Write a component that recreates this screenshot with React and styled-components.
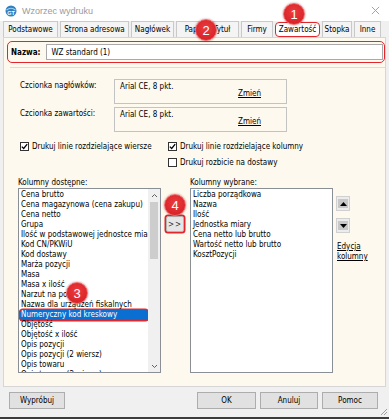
import styled, { createGlobalStyle } from "styled-components";

const GlobalStyle = createGlobalStyle`
  html, body {
    margin: 0;
    padding: 0;
    background: #ffffff;
  }
  body {
    font-family: "DejaVu Sans Condensed", "Liberation Sans", sans-serif;
    font-size: 8px;
    color: #000;
  }
  * {
    box-sizing: border-box;
  }
`;

const tabs = [
  { label: "Podstawowe", width: 55 },
  { label: "Strona adresowa", width: 69 },
  { label: "Nagłówek", width: 43 },
  { label: "Papier i Tytuł", width: 63 },
  { label: "Firmy", width: 32 },
  { label: "Zawartość", width: 45, active: true },
  { label: "Stopka", width: 30 },
  { label: "Inne", width: 27 },
];

const available = [
  "Cena brutto",
  "Cena magazynowa (cena zakupu)",
  "Cena netto",
  "Grupa",
  "Ilość w podstawowej jednostce miary",
  "Kod CN/PKWiU",
  "Kod dostawy",
  "Marża pozycji",
  "Masa",
  "Masa x ilość",
  "Narzut na pozycji",
  "Nazwa dla urządzeń fiskalnych",
  "Numeryczny kod kreskowy",
  "Objętość",
  "Objętość x ilość",
  "Opis pozycji",
  "Opis pozycji (2 wiersz)",
  "Opis towaru",
  "Opis towaru (2 wiersz)",
];

const chosen = [
  "Liczba porządkowa",
  "Nazwa",
  "Ilość",
  "Jednostka miary",
  "Cena netto lub brutto",
  "Wartość netto lub brutto",
  "KosztPozycji",
];

export default function App() {
  return (
    <>
      <GlobalStyle />
      <Window>
        <TitleBar>
          <AppIcon />
          <Title>Wzorzec wydruku</Title>
          <CloseIcon />
        </TitleBar>

        <TabRow>
          {tabs.map((t) => (
            <Tab key={t.label} $width={t.width} $active={t.active}>
              {t.label}
            </Tab>
          ))}
        </TabRow>

        <Panel>
          <NameRow>
            <NameLabel>Nazwa:</NameLabel>
            <NameInput>WZ standard (1)</NameInput>
          </NameRow>
          <Divider />

          <FontRow>
            <FontLabel>Czcionka nagłówków:</FontLabel>
            <FontBox>
              <span>Arial CE, 8 pkt.</span>
              <Link $low>Zmień</Link>
            </FontBox>
          </FontRow>
          <FontRow $gap>
            <FontLabel>Czcionka zawartości:</FontLabel>
            <FontBox>
              <span>Arial CE, 8 pkt.</span>
              <Link $low>Zmień</Link>
            </FontBox>
          </FontRow>

          <CheckGrid>
            <Check checked label="Drukuj linie rozdzielające wiersze" />
            <Check checked label="Drukuj linie rozdzielające kolumny" />
            <span />
            <Check label="Drukuj rozbicie na dostawy" />
          </CheckGrid>

          <Columns>
            <ListColumn>
              <ListLabel>Kolumny dostępne:</ListLabel>
              <ListBox>
                <Items>
                  {available.map((item) => (
                    <Item key={item} $selected={item === "Numeryczny kod kreskowy"}>
                      {item}
                    </Item>
                  ))}
                </Items>
                <ScrollBar>
                  <ScrollArrow>
                    <Chevron up />
                  </ScrollArrow>
                  <Track>
                    <Thumb />
                  </Track>
                  <ScrollArrow>
                    <Chevron />
                  </ScrollArrow>
                </ScrollBar>
              </ListBox>
            </ListColumn>

            <MoveColumn>
              <MoveButton>&gt;&gt;</MoveButton>
            </MoveColumn>

            <ListColumn>
              <ListLabel>Kolumny wybrane:</ListLabel>
              <ListBox>
                <Items>
                  {chosen.map((item) => (
                    <Item key={item}>{item}</Item>
                  ))}
                </Items>
              </ListBox>
            </ListColumn>

            <SideColumn>
              <ArrowButton>
                <Triangle up />
              </ArrowButton>
              <ArrowButton>
                <Triangle />
              </ArrowButton>
              <SideLink>
                <Link>Edycja</Link>
                <Link>kolumny</Link>
              </SideLink>
            </SideColumn>
          </Columns>
        </Panel>

        <Footer>
          <Button $width={56}>Wypróbuj</Button>
          <ButtonGroup>
            <Button $width={59}>OK</Button>
            <Button $width={58}>Anuluj</Button>
            <Button $width={56}>Pomoc</Button>
          </ButtonGroup>
        </Footer>

        <Grip viewBox="0 0 10 10">
          <path d="M9 3 L3 9 M9 6 L6 9" stroke="#a0a0a0" strokeWidth="1" />
        </Grip>

        <Badge $x={283} $y={3}>1</Badge>
        <Badge $x={195} $y={19}>2</Badge>
        <Badge $x={66} $y={282}>3</Badge>
        <Badge $x={164} $y={194}>4</Badge>
      </Window>
    </>
  );
}

function AppIcon() {
  return (
    <svg width="12" height="12" viewBox="0 0 12 12">
      <circle cx="6" cy="6" r="5.5" fill="#2f7fc1" />
      <path d="M1.5 5 Q6 1.5 10.5 5" stroke="#9fd0f0" strokeWidth="1.2" fill="none" />
      <text x="6" y="10" textAnchor="middle" fontSize="5.5" fill="#fff" fontFamily="Liberation Sans" fontWeight="bold">
        GT
      </text>
    </svg>
  );
}

function CloseIcon() {
  return (
    <CloseSvg viewBox="0 0 10 10">
      <path d="M1 1 L9 9 M9 1 L1 9" stroke="#9a9a9a" strokeWidth="1" />
    </CloseSvg>
  );
}

function Check({ checked, label }) {
  return (
    <CheckItem>
      <CheckBox>
        {checked && (
          <svg width="7" height="7" viewBox="0 0 7 7">
            <path d="M0.8 3.6 L2.7 5.5 L6.2 1.2" stroke="#000" strokeWidth="1.3" fill="none" />
          </svg>
        )}
      </CheckBox>
      {label}
    </CheckItem>
  );
}

function Chevron({ up }) {
  return (
    <svg width="7" height="5" viewBox="0 0 7 5">
      <path d={up ? "M1 4 L3.5 1.5 L6 4" : "M1 1 L3.5 3.5 L6 1"} stroke="#606060" strokeWidth="1" fill="none" />
    </svg>
  );
}

function Triangle({ up }) {
  return (
    <TriangleBox>
      <svg width="7" height="4" viewBox="0 0 7 4">
        <path d={up ? "M0 4 L3.5 0 L7 4 Z" : "M0 0 L3.5 4 L7 0 Z"} fill="#000" />
      </svg>
    </TriangleBox>
  );
}

const Window = styled.div`
  position: relative;
  width: 389px;
  height: 419px;
  background: #f0f0f0;
  border-bottom: 2px solid #3c3c3c;
  overflow: hidden;
`;

const TitleBar = styled.div`
  height: 21px;
  background: #ffffff;
  display: flex;
  align-items: center;
  padding: 0 9px 0 5px;
  gap: 5px;
`;

const Title = styled.div`
  flex: 1;
  font-family: "Liberation Sans", sans-serif;
  font-size: 9px;
  color: #9a9a9a;
`;

const CloseSvg = styled.svg`
  width: 9px;
  height: 9px;
`;

const TabRow = styled.div`
  display: flex;
  gap: 2px;
  height: 16px;
  padding-left: 3px;
`;

const Tab = styled.div`
  width: ${(p) => p.$width}px;
  height: ${(p) => (p.$active ? 15 : 16)}px;
  margin-top: ${(p) => (p.$active ? 1 : 0)}px;
  display: flex;
  align-items: center;
  justify-content: center;
  white-space: nowrap;
  background: ${(p) => (p.$active ? "#ffffff" : "#f4f4f4")};
  border: ${(p) => (p.$active ? "1.5px solid #e2262b" : "1px solid #c9c9c9")};
  border-bottom: ${(p) => (p.$active ? "1.5px solid #e2262b" : "none")};
  border-radius: ${(p) => (p.$active ? "4px" : "0")};
`;

const Panel = styled.div`
  margin: 0 3px;
  height: 350px;
  background: #fdf9ee;
  border: 1px solid #d6d6d6;
  padding-top: 3px;
`;

const NameRow = styled.div`
  margin-left: 3px;
  height: 22px;
  display: flex;
  align-items: center;
  gap: 6px;
  padding: 0 1px 0 3px;
  border: 1.5px solid #e2262b;
  border-radius: 5px;
`;

const NameLabel = styled.span`
  font-weight: bold;
`;

const NameInput = styled.div`
  flex: 1;
  height: 16px;
  display: flex;
  align-items: center;
  padding-left: 4px;
  background: #ffffff;
  border: 1px solid #a9a9a9;
`;

const Divider = styled.div`
  margin: 4px 0 0 6px;
  border-top: 1px solid #dcdcdc;
`;

const FontRow = styled.div`
  display: flex;
  padding-left: 16px;
  margin-top: ${(p) => (p.$gap ? 3 : 11)}px;
`;

const FontLabel = styled.div`
  width: 94px;
  padding-top: 2px;
`;

const FontBox = styled.div`
  width: 173px;
  height: 25px;
  display: flex;
  justify-content: space-between;
  padding: 2px 25px 0 5px;
  border: 1px solid #c3c3c3;
`;

const Link = styled.span`
  text-decoration: underline;
  margin-top: ${(p) => (p.$low ? 7 : 0)}px;
`;

const CheckGrid = styled.div`
  display: grid;
  grid-template-columns: 148px auto;
  row-gap: 6px;
  padding-left: 16px;
  margin-top: 9px;
`;

const CheckItem = styled.label`
  display: flex;
  align-items: center;
  gap: 3px;
  height: 10px;
  white-space: nowrap;
`;

const CheckBox = styled.span`
  width: 9px;
  height: 9px;
  display: flex;
  align-items: center;
  justify-content: center;
  background: #ffffff;
  border: 1px solid #333333;
`;

const Columns = styled.div`
  display: flex;
  padding-left: 14px;
  margin-top: 11px;
`;

const ListColumn = styled.div`
  width: 143px;
  display: flex;
  flex-direction: column;
`;

const ListLabel = styled.div`
  height: 10px;
  line-height: 9px;
`;

const ListBox = styled.div`
  height: 185px;
  display: flex;
  background: #ffffff;
  border: 1px solid #8a8f96;
  overflow: hidden;
`;

const Items = styled.div`
  flex: 1;
  min-width: 0;
  padding: 1px 0 0 1px;
`;

const Item = styled.div`
  height: 10px;
  line-height: 10px;
  padding-left: 1px;
  white-space: nowrap;
  overflow: hidden;
  background: ${(p) => (p.$selected ? "#0a6fd0" : "transparent")};
  color: ${(p) => (p.$selected ? "#ffffff" : "#000000")};
  border-radius: ${(p) => (p.$selected ? "3px" : "0")};
  box-shadow: ${(p) => (p.$selected ? "0 0 0 1.5px #e2262b" : "none")};
`;

const ScrollBar = styled.div`
  width: 12px;
  display: flex;
  flex-direction: column;
  background: #f0f0f0;
`;

const ScrollArrow = styled.div`
  height: 12px;
  display: flex;
  align-items: center;
  justify-content: center;
`;

const Track = styled.div`
  flex: 1;
  padding: 1px 2px;
`;

const Thumb = styled.div`
  height: 57px;
  background: #cdcdcd;
`;

const MoveColumn = styled.div`
  width: 29px;
  padding: 38px 0 0 5px;
`;

const MoveButton = styled.div`
  width: 18px;
  height: 16px;
  display: flex;
  align-items: center;
  justify-content: center;
  letter-spacing: 1px;
  color: #333;
  background: #e6e6e6;
  border: 1px solid #b4b4b4;
  border-radius: 2px;
  box-shadow: 0 0 0 1.5px #e2262b;
`;

const SideColumn = styled.div`
  display: flex;
  flex-direction: column;
  padding: 18px 0 0 3px;
  gap: 7px;
`;

const ArrowButton = styled.div`
  width: 14px;
  height: 15px;
  display: flex;
  align-items: center;
  justify-content: center;
  background: #ececec;
  border: 1px solid #d0d0d0;
`;

const TriangleBox = styled.span`
  width: 10px;
  height: 9px;
  display: flex;
  align-items: center;
  justify-content: center;
  background: #c8c8c8;
`;

const SideLink = styled.div`
  display: flex;
  flex-direction: column;
  line-height: 10px;
  margin-top: 2px;
  padding-left: 1px;
`;

const Footer = styled.div`
  display: flex;
  justify-content: space-between;
  padding: 5px 11px 0 9px;
`;

const ButtonGroup = styled.div`
  display: flex;
  gap: 4px;
`;

const Button = styled.div`
  width: ${(p) => p.$width}px;
  height: 17px;
  display: flex;
  align-items: center;
  justify-content: center;
  background: #e1e1e1;
  border: 1px solid #adadad;
`;

const Grip = styled.svg`
  position: absolute;
  right: 1px;
  bottom: 1px;
  width: 10px;
  height: 10px;
`;

const Badge = styled.div`
  position: absolute;
  left: ${(p) => p.$x}px;
  top: ${(p) => p.$y}px;
  width: 22px;
  height: 22px;
  border-radius: 50%;
  display: flex;
  align-items: center;
  justify-content: center;
  font-family: "Liberation Sans", sans-serif;
  font-size: 13px;
  color: #ffffff;
  background: radial-gradient(circle at 50% 40%, #ec3b3d 0%, #d9252a 70%, #c01c21 100%);
  border: 1px solid #f06a6c;
  box-shadow: 0 0 2px rgba(120, 0, 0, 0.5);
`;
